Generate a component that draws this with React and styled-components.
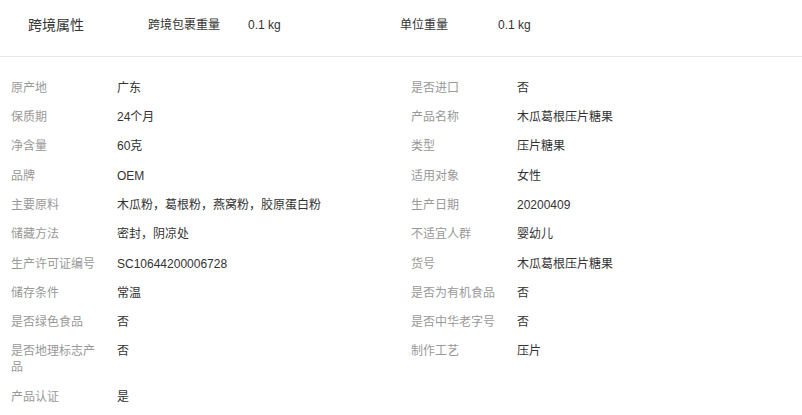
import React from 'react';
import styled, { createGlobalStyle } from 'styled-components';

const GlobalStyle = createGlobalStyle`
  body {
    margin: 0;
    background: #ffffff;
    font-family: "Liberation Sans", "Noto Sans CJK SC", sans-serif;
  }
`;

const Page = styled.div`
  width: 802px;
  background: #ffffff;
`;

const Header = styled.div`
  display: flex;
  align-items: flex-start;
  height: 57px;
  box-sizing: border-box;
  padding: 16px 0 0 28px;
  border-bottom: 1px solid #e8e8e8;
`;

const HeaderTitle = styled.div`
  width: 120px;
  font-size: 14px;
  line-height: 18px;
  color: #333333;
`;

const HeaderLabel = styled.div`
  width: ${(p) => p.$width}px;
  font-size: 12px;
  line-height: 18px;
  color: #333333;
`;

const Body = styled.div`
  display: grid;
  grid-template-columns: 400px 400px;
  padding-top: 16px;
`;

const Column = styled.div`
  display: flex;
  flex-direction: column;
`;

const Row = styled.div`
  display: flex;
  align-items: flex-start;
  padding: 6.67px 0 6.67px 11px;
  font-size: 12px;
  line-height: 16px;
`;

const Label = styled.div`
  width: 90px;
  flex-shrink: 0;
  margin-right: 16px;
  color: #999999;
`;

const Value = styled.div`
  color: #333333;
`;

const leftRows = [
  ['原产地', '广东'],
  ['保质期', '24个月'],
  ['净含量', '60克'],
  ['品牌', 'OEM'],
  ['主要原料', '木瓜粉，葛根粉，燕窝粉，胶原蛋白粉'],
  ['储藏方法', '密封，阴凉处'],
  ['生产许可证编号', 'SC10644200006728'],
  ['储存条件', '常温'],
  ['是否绿色食品', '否'],
  ['是否地理标志产品', '否'],
  ['产品认证', '是'],
];

const rightRows = [
  ['是否进口', '否'],
  ['产品名称', '木瓜葛根压片糖果'],
  ['类型', '压片糖果'],
  ['适用对象', '女性'],
  ['生产日期', '20200409'],
  ['不适宜人群', '婴幼儿'],
  ['货号', '木瓜葛根压片糖果'],
  ['是否为有机食品', '否'],
  ['是否中华老字号', '否'],
  ['制作工艺', '压片'],
];

const renderRows = (rows) =>
  rows.map(([label, value]) => (
    <Row key={label}>
      <Label>{label}</Label>
      <Value>{value}</Value>
    </Row>
  ));

export default function App() {
  return (
    <Page>
      <GlobalStyle />
      <Header>
        <HeaderTitle>跨境属性</HeaderTitle>
        <HeaderLabel $width={100}>跨境包裹重量</HeaderLabel>
        <HeaderLabel $width={152}>0.1 kg</HeaderLabel>
        <HeaderLabel $width={98}>单位重量</HeaderLabel>
        <HeaderLabel $width={100}>0.1 kg</HeaderLabel>
      </Header>
      <Body>
        <Column>{renderRows(leftRows)}</Column>
        <Column>{renderRows(rightRows)}</Column>
      </Body>
    </Page>
  );
}
